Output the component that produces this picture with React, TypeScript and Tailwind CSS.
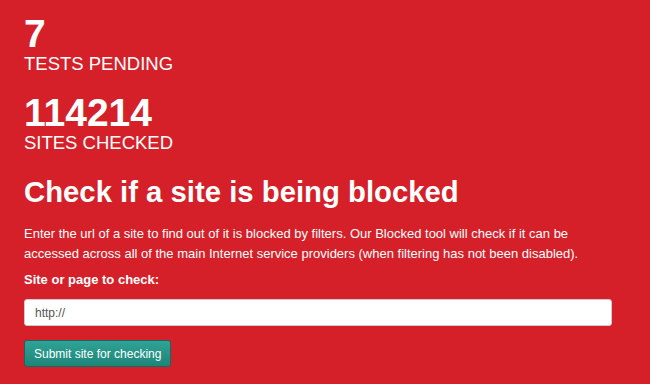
export default function App() {
  return (
    <div
      className="w-[650px] h-[384px] bg-[#d62029] text-white overflow-hidden"
      style={{ fontFamily: '"Liberation Sans", Arial, sans-serif' }}
    >
      <div className="pl-[24px] pr-[38px] pt-[14px]">
        <div className="text-[39px] font-bold leading-[40px]">7</div>
        <div className="text-[18.5px] leading-[22px] mt-[-1px]">TESTS PENDING</div>
        <div className="text-[39px] font-bold leading-[40px] mt-[18px]">114214</div>
        <div className="text-[18.5px] leading-[22px] mt-[-1px]">SITES CHECKED</div>
        <h1 className="text-[29.3px] font-bold leading-[36px] mt-[20px]">Check if a site is being blocked</h1>
        <p className="text-[13px] leading-[20px] mt-[14px]">
          Enter the url of a site to find out of it is blocked by filters. Our Blocked tool will check if it can be
          accessed across all of the main Internet service providers (when filtering has not been disabled).
        </p>
        <div className="text-[13px] font-bold leading-[20px] mt-[6px]">Site or page to check:</div>
        <div className="mt-[9px] h-[27px] bg-white rounded-[3px] border border-[#ccc] flex items-center px-[10px] text-[12px] text-[#555]">
          http://
        </div>
        <button className="mt-[14px] h-[27px] px-[9px] rounded-[3px] text-[12px] text-white bg-gradient-to-b from-[#2fa395] to-[#1d8579] border border-[#17695f]">
          Submit site for checking
        </button>
      </div>
    </div>
  );
}
